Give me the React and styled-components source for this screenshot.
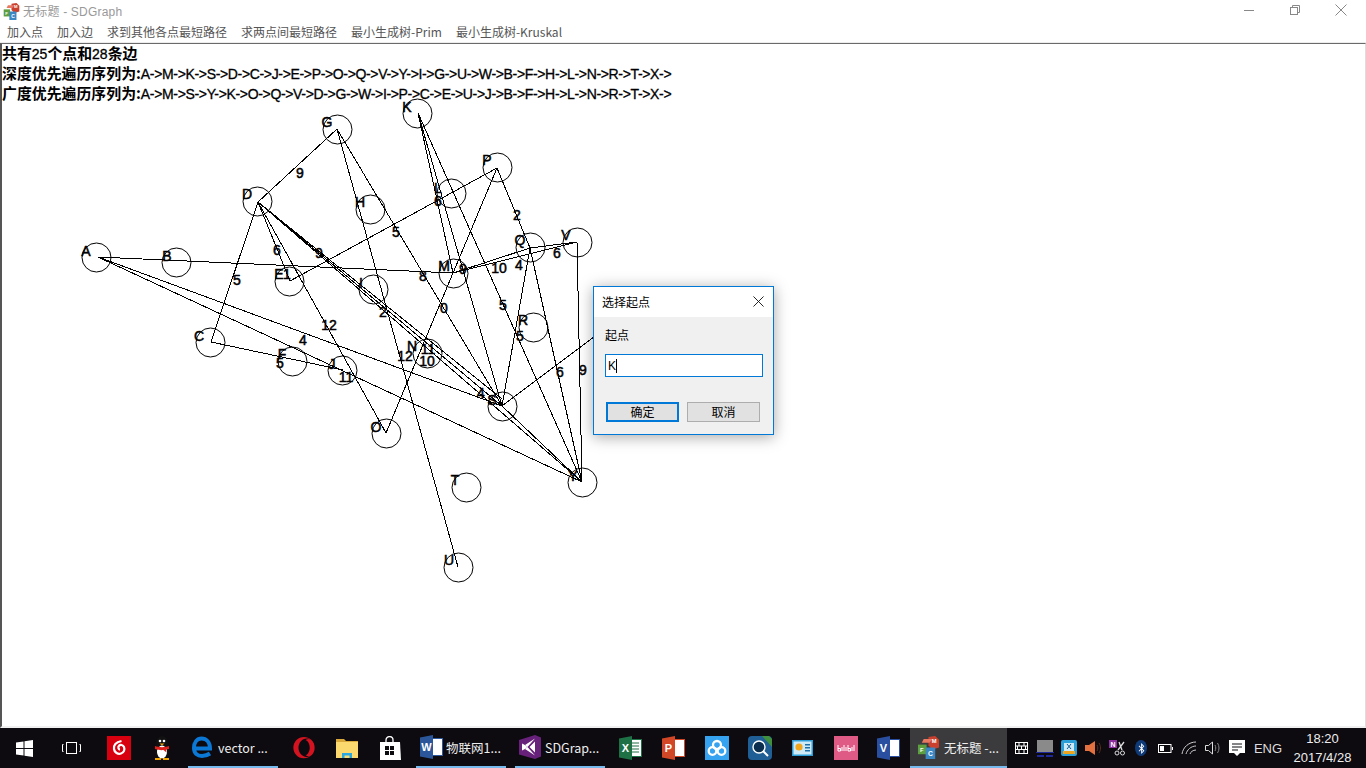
import React from "react";
import styled, { createGlobalStyle } from "styled-components";
import { FaOpera, FaBluetoothB } from "react-icons/fa";

const Global = createGlobalStyle`
  html, body { margin: 0; padding: 0; width: 1366px; height: 768px; overflow: hidden; background: #fff; }
  * { box-sizing: border-box; }
`;
const UI = `"Noto Sans CJK SC", "Liberation Sans", sans-serif`;
const Page = styled.div`
  width: 1366px; height: 768px; display: flex; flex-direction: column; position: relative; overflow: hidden;
  font-family: "Liberation Sans", "Noto Sans CJK SC", sans-serif; background: #fff;
`;
const TitleBar = styled.div`
  height: 22px; flex: none; display: flex; align-items: center; padding-left: 3px; gap: 3px; position: relative;
`;
const TitleText = styled.div`
  font-size: 12px; color: #999; letter-spacing: 0.2px; line-height: 22px; padding-top: 1px;
`;
const WinControls = styled.div`
  margin-left: auto; display: flex; height: 22px; align-items: center; padding-right: 2px;
`;
const WinButton = styled.div`
  width: 46px; height: 22px; display: flex; align-items: center; justify-content: center; padding-bottom: 2px;
`;
const MenuBar = styled.div`
  height: 21px; flex: none; display: flex; padding-left: 7px; gap: 14px; align-items: center; background: #fff;
  border-bottom: 1px solid #ececec;
`;
const MenuItem = styled.div`
  font-size: 12px; color: #555; white-space: nowrap; font-family: ${UI}; line-height: 20px;
`;
const Client = styled.div`
  flex: 1; position: relative; border-top: 1px solid #6a6a6a; border-left: 2px solid #555; border-bottom: 2px solid #f0f0f0;
  border-right: 1px solid #ddd; background: #fff;
`;
const InfoLine = styled.div`
  font-size: 14.9px; height: 20px; line-height: 17px; font-weight: 700; white-space: nowrap; color: #000;
  position: relative; z-index: 1;
  font-family: "Noto Sans CJK SC", sans-serif; letter-spacing: 0;
`;
const Latin = styled.span`
  font-family: "Liberation Sans", sans-serif; font-weight: 400; font-size: 14px; letter-spacing: ${p => p.$ls || 0}px;
  -webkit-text-stroke: 0.3px #000;
`;
const Canvas = styled.svg`
  position: absolute; left: -2px; top: -44px; width: 1366px; height: 768px; pointer-events: none;
`;
const Edge = styled.line`
  stroke: #000; stroke-width: 1; shape-rendering: crispEdges;
`;
const NodeCircle = styled.circle`
  fill: none; stroke: #000; stroke-width: 1; shape-rendering: geometricPrecision;
`;
const GraphText = styled.text`
  font-family: "Liberation Sans", sans-serif; font-size: 14px; font-weight: 400; fill: #000; stroke: #000; stroke-width: 0.5px;
  text-anchor: middle;
`;
const Dialog = styled.div`
  position: absolute; left: 593px; top: 286px; width: 181px; height: 149px; border: 1px solid #0078d7; background: #f0f0f0;
  box-shadow: 0 2px 14px rgba(0,0,0,0.35); display: flex; flex-direction: column; font-family: ${UI};
  z-index: 5;
`;
const DialogHead = styled.div`
  height: 30px; flex: none; background: #fff; display: flex; align-items: center; justify-content: space-between;
  padding: 0 9px 2px 8px; font-size: 12px; color: #000;
`;
const DialogBody = styled.div`
  flex: 1; padding: 9px 10px 0 11px; display: flex; flex-direction: column;
`;
const FieldLabel = styled.div`
  font-size: 12px; line-height: 18px; color: #000; height: 18px;
`;
const FieldInput = styled.div`
  margin-top: 10px; width: 158px; height: 23px; border: 1px solid #0078d7; background: #fff; font-size: 12px;
  display: flex; align-items: center; padding-left: 2px; font-family: "Liberation Sans", sans-serif;
`;
const Caret = styled.span`
  width: 1px; height: 14px; background: #000; margin-left: 0;
`;
const ButtonRow = styled.div`
  margin-top: 25px; display: flex; gap: 8px; padding-left: 1px;
`;
const DlgButton = styled.div`
  width: 73px; height: 20px; background: #e1e1e1; border: ${p => p.$primary ? "2px solid #0078d7" : "1px solid #adadad"};
  font-size: 12px; line-height: 14px; display: flex; align-items: center; justify-content: center; color: #000; padding-bottom: 1px;
`;
const Taskbar = styled.div`
  height: 40px; flex: none; background: #0d0a10; display: flex; align-items: stretch; color: #fff;
  font-family: ${UI};
`;
const BigCell = styled.div`
  width: 48px; display: flex; align-items: center; justify-content: center; flex: none;
`;
const IconCell = styled.div`
  width: 43px; margin-left: ${p => p.$ml || 0}px; display: flex; align-items: center; justify-content: center; flex: none;
`;
const TaskApp = styled.div`
  width: ${p => p.$w || 90}px; margin-left: ${p => p.$ml || 0}px; flex: none; display: flex; align-items: center; gap: ${p => p.$gap || 5}px;
  padding-left: ${p => p.$pl || 4}px; font-size: 12.5px; color: #eee; white-space: nowrap;
  border-bottom: 2px solid #76b9ed; background: ${p => p.$active ? "#3b3b3d" : "transparent"};
`;
const TrayCell = styled.div`
  width: 24px; margin-left: ${p => p.$ml || 0}px; display: flex; align-items: center; justify-content: center; flex: none;
`;
const BluetoothBadge = styled.span`
  position: relative; display: flex;
  & > svg + svg { position: absolute; left: 0.5px; top: 2.5px; }
`;
const Lang = styled.div`
  width: 38px; display: flex; align-items: center; justify-content: center; font-size: 13px; color: #ddd;
  font-family: "Liberation Sans", sans-serif; flex: none;
`;
const Clock = styled.div`
  width: 71px; display: flex; flex-direction: column; align-items: center; justify-content: center; font-size: 13px;
  line-height: 19px; color: #eee; flex: none; font-family: "Liberation Sans", sans-serif;
`;

const N = {
  A:[96,257],B:[176,262],C:[210,342],D:[257,201],E:[289,281],F:[292,361],G:[337,129],H:[370,209],I:[373,289],
  J:[342,370],K:[417,113],L:[451,193],M:[453,273],N:[427,353],O:[386,433],P:[497,167],Q:[530,247],R:[533,327],
  S:[502,406],T:[466,487],U:[458,567],V:[577,242],Y:[582,482],
};
const LABELS = {
  A:[86,251],B:[167,256],C:[199,336],D:[247,194],E:[279,274],F:[282,354],G:[327,122],H:[360,202],I:[361,283],
  J:[332,364],K:[407,107],L:[438,188],M:[444,266],N:[412,346],O:[376,427],P:[487,160],Q:[520,240],R:[523,320],
  S:[492,400],T:[455,480],U:[449,560],V:[566,235],Y:[573,476],
};
const W = [
  ["9",300,173],["6",438,201],["6",277,250],["9",319,253],["5",237,280],["5",396,232],["2",517,215],["1",287,274],
  ["8",423,276],["9",463,269],["10",499,268],["4",519,265],["6",557,253],["0",444,308],["5",503,305],["12",329,325],
  ["2",383,312],["5",520,336],["4",303,340],["5",280,363],["11",346,377],["12",405,356],["11",428,349],["10",427,361],
  ["6",560,372],["9",583,370],["4",481,393],
];
const E = [
  [98,257,453,273],[98,257,502,406],[98,257,582,482],[211,342,343,370],[258,202,211,342],[258,202,337,129],[258,202,290,281],
  [258,202,386,433],[258,202,502,406],[258,202,582,482],[258,202,502,399],[290,281,497,168],[337,129,458,567],
  [337,129,502,406],[418,113,453,273],[418,113,502,406],[418,113,582,482],[453,273,530,248],[453,273,577,242],[530,248,577,242],
  [530,248,502,406],[530,248,582,482],[497,168,530,248],[497,168,386,433],[577,242,582,482],[502,406,610,325],[502,406,582,482],
];

const WinLogo = () => (<svg width="17" height="17" viewBox="0 0 17 17"><path fill="#fff" d="M0 2.5 7.5 1.4V8H0zM8.5 1.2 17 0v8H8.5zM0 9h7.5v6.6L0 14.5zM8.5 9H17v8L8.5 15.8z"/></svg>);
const TaskView = () => (<svg width="22" height="14" viewBox="0 0 22 14" fill="none" stroke="#fff"><rect x="5.5" y="1.5" width="10" height="11"/><path d="M2.5 3.5h-1v7h1M18.5 3.5h1v7h-1"/></svg>);
const Netease = () => (<svg width="24" height="24" viewBox="0 0 24 24"><rect width="24" height="24" fill="#d8000f"/><path fill="none" stroke="#fff" strokeWidth="2.2" d="M14.5 5c-5 1-8 4-7.5 8 .4 3.600 4 5.500 7 4.500 3-1 4-4 3-6.500-.9-2.200-3.700-2.800-5-1.200-1.200 1.400-.6 3.600 1 3.800"/></svg>);
const QQ = () => (<svg width="20" height="24" viewBox="0 0 20 24"><ellipse cx="10" cy="7" rx="6" ry="7" fill="#111"/><ellipse cx="10" cy="15" rx="7" ry="8" fill="#111"/><ellipse cx="10" cy="16" rx="5" ry="6.500" fill="#fff"/><circle cx="8" cy="5" r="1.300" fill="#fff"/><circle cx="12" cy="5" r="1.300" fill="#fff"/><path fill="#f5a500" d="M7.500 7.500h5L10 9.500z"/><path fill="#e0201b" d="M3 10c4 1.500 10 1.500 14 0v3l-3 .5.500 3-3-2.500c-2.500.4-5 0-8.500-1z"/><path fill="#f5a500" d="M3 22h6v2H3zM11 22h6v2h-6z"/></svg>);
const EdgeLogo = () => (<svg width="21" height="22" viewBox="0 0 21 22"><path fill="none" stroke="#0a78d4" strokeWidth="4" d="M3 12.500h15c0-6-3.500-10-8.500-10C5 2.500 2 6.500 2 12c0 5.500 3.500 8 8 8 3 0 5.500-.8 8-2.500"/></svg>);
const Folder = () => (<svg width="22" height="20" viewBox="0 0 22 20"><path fill="#d9a93a" d="M0 1h8l2 2h12v3H0z"/><rect y="4" width="22" height="16" fill="#fbd96e"/><path fill="#29a7e1" d="M6 20v-5h10v5h-2.500v-2.500h-5V20z"/></svg>);
const Store = () => (<svg width="22" height="24" viewBox="0 0 22 24"><path fill="none" stroke="#fff" strokeWidth="1.300" d="M7 6V4c0-4.500 7-4.500 7 0v2"/><path fill="#fff" d="M1 6h20l1 18H1z"/><path fill="#0d0a10" d="M6 10h4v4H6zM11 10h4v4h-4zM6 15h4v4H6zM11 15h4v4h-4z"/></svg>);
const Office = ({ c, l, lines }) => (<svg width="23" height="24" viewBox="0 0 23 24"><rect x="9" y="3.500" width="13.500" height="17" fill="#fff" stroke={c}/>{lines && <path stroke={c} d="M12 7h8M12 10h8M12 13h8M12 16h8"/>}<path fill={c} d="M0 2.500 13 0v24L0 21.500z"/><text x="6.500" y="16" fontSize="11" fontWeight="700" fill="#fff" textAnchor="middle" fontFamily="Liberation Sans">{l}</text></svg>);
const VS = () => (<svg width="22" height="24" viewBox="0 0 22 24"><path fill="#68217a" d="M16 0l6 2.500v19L16 24 0 19.500V5z"/><path fill="#fff" d="M16 6.500v11L10.500 12zM3 8.500l3 1.500 2.500 2L6 14l-3 1.500z"/><path fill="#fff" d="M16 3.500 6 10l2.500 2zM16 20.500 6 14l2.500-2z"/></svg>);
const Cloud = () => (<svg width="24" height="24" viewBox="0 0 24 24"><rect width="24" height="24" fill="#36a3f1"/><g fill="none" stroke="#fff" strokeWidth="2.300"><circle cx="12" cy="9" r="4"/><circle cx="7.500" cy="15" r="3.800"/><circle cx="16.500" cy="15" r="3.800"/></g></svg>);
const Lens = () => (<svg width="24" height="24" viewBox="0 0 24 24"><rect width="24" height="24" rx="4" fill="#1f5f95"/><path fill="#3f8f3c" d="M14 0h7l3 3v8z"/><circle cx="11" cy="11" r="6" fill="#0d2f4f" stroke="#fff" strokeWidth="1.400"/><path stroke="#fff" strokeWidth="2" d="M15 15l5 5"/></svg>);
const Chart = () => (<svg width="21" height="16" viewBox="0 0 21 16"><rect width="21" height="16" fill="#2b9ed8"/><rect x="1.500" y="1.500" width="18" height="13" fill="#cfeaf7"/><circle cx="7" cy="7" r="3.600" fill="#f0a51e"/><path fill="#1e6fa5" d="M13 4h5v1.500h-5zM13 7h5v1.500h-5zM13 10h5v1.500h-5z"/></svg>);
const Bili = () => (<svg width="24" height="24" viewBox="0 0 24 24"><rect width="24" height="24" fill="#e05a86"/><path stroke="#fff" fill="none" d="M4 9v6h2.500v-2.500H4M8 11v4M10 9v6M12 11v4M14 9v6h2.500v-2.500H14M18 11v4M20 9v6"/></svg>);
const Mfc = ({ s }) => (<svg width={s} height={s} viewBox="0 0 24 24"><path fill="#c9402e" d="M12 1l7-1 4 4v8l-7 2-4-4z"/><path fill="#e8785f" d="M7 3h9l-3 4H5z"/><path fill="#5d9e3e" d="M1 9h9v10H1z"/><path fill="#3a87c4" d="M9 12h10v12H9z"/><text x="18" y="7" fontSize="6" fill="#fff" fontFamily="Liberation Sans" fontWeight="700" textAnchor="middle">M</text><text x="5" y="17" fontSize="6" fill="#fff" fontFamily="Liberation Sans" fontWeight="700" textAnchor="middle">F</text><text x="14" y="21" fontSize="7" fill="#fff" fontFamily="Liberation Sans" fontWeight="700" textAnchor="middle">C</text></svg>);
const Keyb = () => (<svg width="15" height="14" viewBox="0 0 15 14" fill="none" stroke="#fff"><rect x="1.500" y="1.500" width="12" height="11"/><path d="M1.500 5h12M1.500 8.500h12M5 1.500V5M10 1.500V5M3.500 5v3.500M7.500 5v3.500M11.500 5v3.500M5 8.500v4M10 8.500v4"/></svg>);
const Mon = () => (<svg width="18" height="17" viewBox="0 0 18 17"><rect x="1" y="0" width="16" height="12" fill="#8a8a8a"/><path fill="#1e2a9a" d="M0 12h18v1H0zM1 15h7v2H1zM10 15h7v2h-7z"/></svg>);
const BlueApp = () => (<svg width="16" height="16" viewBox="0 0 16 16"><rect width="16" height="16" rx="2" fill="#2d9fd8"/><rect x="3" y="3" width="10" height="8" fill="#cfeaf7"/><path fill="#f0a51e" d="M2 11h12v3H2z"/><path stroke="#135a8e" d="M6 4l4 5M10 4L6 9"/></svg>);
const Speaker = () => (<svg width="16" height="14" viewBox="0 0 16 14"><path fill="#e2713f" d="M0 4h4l6-4v14l-6-4H0z"/><path stroke="#5a2c1c" fill="none" d="M12 4c1 2 1 4 0 6M14 2c2 3 2 7 0 10"/></svg>);
const OneCut = () => (<svg width="16" height="16" viewBox="0 0 16 16"><rect width="8" height="8" fill="#8d2f9e"/><text x="4" y="7" fontSize="7" fill="#fff" textAnchor="middle" fontFamily="Liberation Sans" fontWeight="700">N</text><path stroke="#ddd" strokeWidth="1.300" fill="none" d="M10 2l3 8M15 2l-6 8"/><circle cx="8" cy="13" r="2" fill="none" stroke="#ddd"/><circle cx="13.500" cy="13" r="2" fill="none" stroke="#ddd"/></svg>);
const Blue = () => (<svg width="12" height="16" viewBox="0 0 12 16"><ellipse cx="6" cy="8" rx="6" ry="8" fill="#0f3a78"/></svg>);
const Batt = () => (<svg width="15" height="9" viewBox="0 0 15 9" fill="none" stroke="#fff"><rect x=".500" y=".500" width="12.500" height="8"/><rect x="2" y="2" width="4" height="5" fill="#fff" stroke="none"/><path d="M14.500 3v3"/></svg>);
const Wifi = () => (<svg width="17" height="14" viewBox="0 0 17 14" fill="none" stroke="#ccc"><path d="M1 13C2 6 8 1 15 1M5 13c1-4 5-8 10-8M9 13c.5-2 3-4 6-4"/></svg>);
const Vol = () => (<svg width="16" height="14" viewBox="0 0 16 14" fill="none" stroke="#ddd"><path d="M.500 4.500h3l4-3.500v12l-4-3.500h-3z"/><path stroke="#888" d="M10 4c1 2 1 4 0 6M12.500 2c2 3 2 7 0 10"/></svg>);
const Note = () => (<svg width="16" height="16" viewBox="0 0 16 16"><path fill="#fff" d="M0 0h16v13h-5l-3 3-3-3H0z"/><path stroke="#0d0a10" d="M3 4h10M3 7h10M3 10h6"/></svg>);

const Minimize = () => (<svg width="10" height="10" viewBox="0 0 10 10"><path stroke="#888" d="M0 5.500h10" /></svg>);
const Restore = () => (<svg width="10" height="10" viewBox="0 0 10 10" fill="none" stroke="#888"><rect x=".500" y="2.500" width="7" height="7"/><path d="M2.500 2.500v-2h7v7h-2"/></svg>);
const Close = ({ c, s }) => (<svg width={s} height={s} viewBox="0 0 12 12" fill="none" stroke={c}><path d="M.500 .500l11 11M11.500 .500l-11 11"/></svg>);

const LAT = "A->M->K->S->D->C->J->E->P->O->Q->V->Y->I->G->U->W->B->F->H->L->N->R->T->X->";
const LAT2 = "A->M->S->Y->K->O->Q->V->D->G->W->I->P->C->E->U->J->B->F->H->L->N->R->T->X->";

export default function App() {
  return (
    <Page>
      <Global />
      <TitleBar>
        <Mfc s={17} />
        <TitleText>无标题 - SDGraph</TitleText>
        <WinControls>
          <WinButton><Minimize /></WinButton>
          <WinButton><Restore /></WinButton>
          <WinButton><Close c="#888" s={12} /></WinButton>
        </WinControls>
      </TitleBar>
      <MenuBar>
        {["加入点","加入边","求到其他各点最短路径","求两点间最短路径","最小生成树-Prim","最小生成树-Kruskal"].map(t => <MenuItem key={t}>{t}</MenuItem>)}
      </MenuBar>
      <Client>
        <InfoLine>共有<Latin>25</Latin>个点和<Latin>28</Latin>条边</InfoLine>
        <InfoLine>深度优先遍历序列为:<Latin $ls={-0.34}>{LAT}</Latin></InfoLine>
        <InfoLine>广度优先遍历序列为:<Latin $ls={-0.34}>{LAT2}</Latin></InfoLine>
        <Canvas viewBox="0 0 1366 768">
          {Object.entries(N).map(([k,[x,y]]) => <NodeCircle key={k} cx={x+0.5} cy={y+0.5} r={14.5} />)}
          {E.map((e,i) => <Edge key={i} x1={e[0]} y1={e[1]} x2={e[2]} y2={e[3]} />)}
          {Object.entries(LABELS).map(([k,[x,y]]) => <GraphText key={k} x={x} y={y+5}>{k}</GraphText>)}
          {W.map((w,i) => <GraphText key={i} x={w[1]} y={w[2]+5}>{w[0]}</GraphText>)}
        </Canvas>
      </Client>
      <Dialog>
        <DialogHead>选择起点<Close c="#111" s={11} /></DialogHead>
        <DialogBody>
          <FieldLabel>起点</FieldLabel>
          <FieldInput>K<Caret /></FieldInput>
          <ButtonRow>
            <DlgButton $primary>确定</DlgButton>
            <DlgButton>取消</DlgButton>
          </ButtonRow>
        </DialogBody>
      </Dialog>
      <Taskbar>
        <BigCell><WinLogo /></BigCell>
        <BigCell><TaskView /></BigCell>
        <IconCell $ml={1}><Netease /></IconCell>
        <IconCell><QQ /></IconCell>
        <TaskApp $ml={5}><EdgeLogo />vector ...</TaskApp>
        <TaskIconGroup />
        <TaskApp $ml={5} $gap={3}><Office c="#2b579a" l="W" />物联网1...</TaskApp>
        <TaskApp $ml={9} $gap={4}><VS />SDGrap...</TaskApp>
        <IconCell $ml={4}><Office c="#1e7145" l="X" lines /></IconCell>
        <IconCell><Office c="#d24726" l="P" /></IconCell>
        <IconCell><Cloud /></IconCell>
        <IconCell><Lens /></IconCell>
        <IconCell><Chart /></IconCell>
        <IconCell><Bili /></IconCell>
        <IconCell><Office c="#2b4fa0" l="V" /></IconCell>
        <TaskApp $w={97} $pl={7} $gap={4} $active><Mfc s={23} />无标题 -...</TaskApp>
        <TrayCell $ml={2}><Keyb /></TrayCell>
        <TrayCell><Mon /></TrayCell>
        <TrayCell><BlueApp /></TrayCell>
        <TrayCell><Speaker /></TrayCell>
        <TrayCell><OneCut /></TrayCell>
        <TrayCell><BluetoothBadge><Blue /><FaBluetoothB size={11} color="#fff" /></BluetoothBadge></TrayCell>
        <TrayCell><Batt /></TrayCell>
        <TrayCell><Wifi /></TrayCell>
        <TrayCell><Vol /></TrayCell>
        <TrayCell><Note /></TrayCell>
        <Lang>ENG</Lang>
        <Clock><span>18:20</span><span>2017/4/28</span></Clock>
      </Taskbar>
    </Page>
  );
}

function TaskIconGroup() {
  return (
    <>
      <IconCell $ml={4}><FaOpera size={22} color="#d3131f" /></IconCell>
      <IconCell><Folder /></IconCell>
      <IconCell><Store /></IconCell>
    </>
  );
}
